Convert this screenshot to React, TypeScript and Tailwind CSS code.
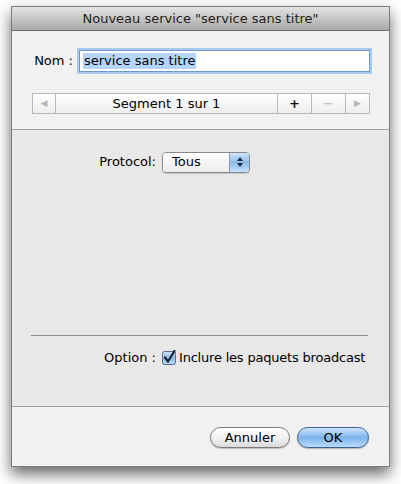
import React from 'react';

const font = { fontFamily: '"DejaVu Sans", "Liberation Sans", sans-serif' };

const Checkbox = () => (
  <svg width="15" height="15" viewBox="0 0 15 15">
    <defs>
      <linearGradient id="cb" x1="0" y1="0" x2="0" y2="1">
        <stop offset="0" stopColor="#cfe3f7" />
        <stop offset="0.5" stopColor="#8fbbe8" />
        <stop offset="1" stopColor="#b9daf7" />
      </linearGradient>
    </defs>
    <rect x="0.5" y="1.5" width="13" height="13" rx="2" fill="url(#cb)" stroke="#5a6e86" />
    <path d="M3 7.5 L6 11.5 L12.5 1" fill="none" stroke="#1b2230" strokeWidth="2.2" strokeLinecap="round" strokeLinejoin="round" />
  </svg>
);

const PopupArrows = () => (
  <svg width="8" height="12" viewBox="0 0 8 12">
    <path d="M4 1 L7 5 L1 5 Z" fill="#1c2a3c" />
    <path d="M4 11 L7 7 L1 7 Z" fill="#1c2a3c" />
  </svg>
);

export default function App() {
  return (
    <div className="w-[401px] h-[484px] bg-white pt-[6px] pl-[11px]" style={font}>
      <div className="w-[379px] h-[461px] flex flex-col border border-[#7d7d7d] shadow-[0_7px_14px_rgba(0,0,0,0.6)]">
        {/* Title bar */}
        <div className="h-[24px] shrink-0 flex items-center justify-center bg-gradient-to-b from-[#e4e4e4] to-[#a9a9a9] border-b border-[#6f6f6f] text-[13px] text-[#222]">
          Nouveau service "service sans titre"
        </div>

        {/* Top */}
        <div className="h-[99px] shrink-0 bg-[#f1f1f1] border-b border-[#a6a6a6] flex flex-col pt-[19px] pl-[20px] pr-[19px]">
          <div className="flex items-center h-[22px]">
            <span className="w-[47px] text-[13px] text-black text-right pr-[6px]">Nom :</span>
            <div className="flex-1 h-[22px] bg-white border border-[#6b9bd3] shadow-[0_0_0_2px_#a9c9ee] flex items-center pl-[3px]">
              <span className="bg-[#b5d5ff] text-[13px] leading-[16px] px-[1px] text-black">service sans titre</span>
            </div>
          </div>
          <div className="mt-[21px] flex h-[21px] border border-[#b9b9b9] bg-gradient-to-b from-[#ffffff] to-[#eeeeee] text-[13px]">
            <div className="w-[23px] flex items-center justify-center border-r border-[#b9b9b9] text-[9px] text-[#b5b5b5]">◀</div>
            <div className="flex-1 flex items-center justify-center text-black border-r border-[#b9b9b9]">Segment 1 sur 1</div>
            <div className="w-[34px] flex items-center justify-center border-r border-[#b9b9b9] font-bold text-[#111]">+</div>
            <div className="w-[34px] flex items-center justify-center border-r border-[#b9b9b9] text-[#b5b5b5]">−</div>
            <div className="flex-1 max-w-[23px] flex items-center justify-center text-[9px] text-[#b5b5b5]">▶</div>
          </div>
        </div>

        {/* Middle */}
        <div className="flex-1 bg-[#e8e8e8] border-b border-[#a6a6a6] flex flex-col">
          <div className="flex items-center mt-[21px] h-[22px]">
            <span className="w-[150px] text-right pr-[6px] text-[13px] text-black">Protocol:</span>
            <div className="w-[88px] h-[21px] flex rounded-[4px] border border-[#8a8a8a] overflow-hidden shadow-[0_1px_1px_rgba(0,0,0,0.15)]">
              <div className="flex-1 flex items-center pl-[9px] text-[13px] text-black bg-gradient-to-b from-[#ffffff] to-[#ececec]">Tous</div>
              <div className="w-[20px] flex items-center justify-center border-l border-[#7f9cc2] bg-gradient-to-b from-[#d2e6fb] via-[#8ebcea] to-[#c6e1fb]">
                <PopupArrows />
              </div>
            </div>
          </div>
          <div className="mt-[162px] ml-[19px] mr-[21px] h-px bg-[#8f8f8f]" />
          <div className="flex items-center mt-[13px] h-[17px]">
            <span className="w-[150px] text-right pr-[6px] text-[13px] text-black">Option :</span>
            <Checkbox />
            <span className="ml-[2px] text-[13px] tracking-[-0.2px] text-black">Inclure les paquets broadcast</span>
          </div>
        </div>

        {/* Bottom */}
        <div className="h-[59px] shrink-0 bg-[#f1f1f1] flex justify-end items-start pt-[20px] pr-[20px] gap-[7px]">
          <div className="w-[80px] h-[21px] rounded-full border border-[#7a7a7a] bg-gradient-to-b from-[#ffffff] via-[#f2f2f2] to-[#dcdcdc] flex items-center justify-center text-[13px] text-black shadow-[0_1px_1px_rgba(0,0,0,0.2)]">
            Annuler
          </div>
          <div className="w-[72px] h-[21px] rounded-full border border-[#3b5f93] bg-gradient-to-b from-[#cfe5fb] via-[#7fb3ea] to-[#b8dcfb] flex items-center justify-center text-[13px] text-black shadow-[0_1px_1px_rgba(0,0,0,0.25)]">
            OK
          </div>
        </div>
      </div>
    </div>
  );
}
